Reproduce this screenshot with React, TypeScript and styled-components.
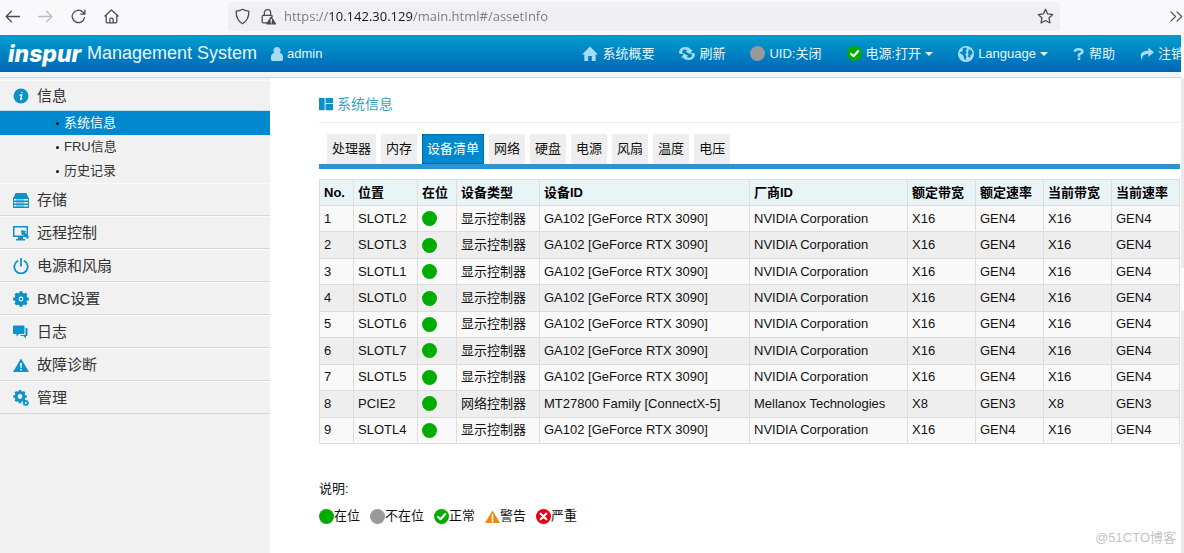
import React from "react";
import styled, { createGlobalStyle, css } from "styled-components";

const sans = `"Liberation Sans", "Noto Sans CJK SC", sans-serif`;
const blue = "#0b93c9";
const pale = "#a3dcf3";

const GlobalStyle = createGlobalStyle`
  * { box-sizing: border-box; }
  html, body, #root { height: 100%; }
  body { margin: 0; background: #fff; font: 13px/20px ${sans}; color: #111; overflow: hidden; }
  button { font: inherit; color: inherit; background: none; border: 0; padding: 0; cursor: pointer; }
  a { color: inherit; text-decoration: none; }
  ul { list-style: none; margin: 0; padding: 0; }
  svg { display: block; flex: none; }
`;

const Page = styled.div`
  display: flex;
  flex-direction: column;
  min-height: 100%;
`;

/* Browser toolbar */
const BrowserBar = styled.div`
  display: flex;
  align-items: center;
  height: 35px;
  padding: 0 0 3px 4px;
  background: #f9f9fb;
`;
const BarButton = styled.button<{ $muted?: boolean }>`
  display: flex;
  margin-right: 16px;
  color: ${(p) => (p.$muted ? "#bdbdc1" : "#4a4a50")};
`;
const AddressBox = styled.div`
  display: flex;
  align-items: center;
  flex: 1;
  height: 29px;
  margin: 0 109px 0 92px;
  padding: 0 6px;
  border-radius: 4px;
  background: #f0f0f4;
  color: #4a4a50;
  gap: 8px;
`;
const Address = styled.input`
  flex: 1;
  min-width: 0;
  border: 0;
  outline: 0;
  padding: 0;
  height: 20px;
  font: 13px/20px "Open Sans", "Noto Sans", sans-serif;
  color: transparent;
  background: linear-gradient(to right, #77777c 0 45px, #15141a 45px 129px, #77777c 129px);
  background-clip: text;
  -webkit-background-clip: text;
`;

/* Application header */
const Header = styled.header`
  display: flex;
  align-items: center;
  height: 37px;
  margin-right: 3px;
  padding-left: 8px;
  overflow: hidden;
  white-space: nowrap;
  color: #e6f6fd;
  background: linear-gradient(#009ecf, #0067b5);
`;
const Logo = styled.span`
  width: 79px;
  font: italic 800 23px/30px Inter, sans-serif;
  color: #fff;
`;
const Title = styled.h1`
  margin: 0;
  padding-bottom: 2px;
  font-size: 18px;
  font-weight: 400;
`;
const User = styled.span`
  display: flex;
  align-items: center;
  gap: 3px;
  margin-left: 13px;
`;
const Nav = styled.nav`
  display: flex;
  gap: 25px;
  margin: 0 -3px 0 auto;
`;
const NavButton = styled.button`
  display: flex;
  align-items: center;
  gap: 4px;
`;
const Caret = styled.span`
  border: 4px solid transparent;
  border-top-color: #e6f6fd;
  border-bottom: 0;
`;
const HeaderRule = styled.div`
  height: 6px;
  margin-right: 3px;
  background: #f1f4f9;
  border-bottom: 1px solid #ccd4e3;
`;

/* Body */
const Body = styled.div`
  display: flex;
  flex: 1;
`;
const Sidebar = styled.aside`
  width: 270px;
  flex: none;
  padding-top: 2px;
  background: #f1f1f1;
`;
const MenuButton = styled.button<{ $open?: boolean }>`
  display: flex;
  align-items: center;
  gap: 8px;
  width: 100%;
  height: ${(p) => (p.$open ? 31 : 33)}px;
  padding: 0 13px;
  font-size: 15px;
  color: #333;
  border-top: 1px solid #fafafa;
  border-bottom: 1px solid ${(p) => (p.$open ? "#c5e3f0" : "#d8d8d8")};
`;
const SubLink = styled.a<{ $active?: boolean }>`
  display: flex;
  align-items: center;
  gap: 5px;
  height: 24px;
  padding-left: 56px;
  color: ${(p) => (p.$active ? "#fff" : "#333")};
  background: ${(p) => (p.$active ? "#0088cf" : "transparent")};
  &::before {
    content: "";
    width: 3px;
    height: 3px;
    border-radius: 50%;
    background: #111;
  }
`;
const Main = styled.main`
  position: relative;
  flex: 1;
  min-width: 0;
  padding: 14px 1px 0 49px;
`;
const PageTitle = styled.h2`
  display: flex;
  align-items: center;
  gap: 4px;
  height: 31px;
  margin: 0 0 11px;
  padding-bottom: 7px;
  font-size: 14px;
  font-weight: 400;
  color: #3a9fc0;
  border-bottom: 1px solid #ececec;
`;
const Tabs = styled.div`
  display: flex;
  gap: 5px;
  padding-left: 8px;
  border-bottom: 5px solid #2b93d1;
`;
const Tab = styled.button<{ $active?: boolean }>`
  height: 30px;
  padding: 0 5px;
  background: #eee;
  ${(p) =>
    p.$active &&
    css`
      color: #fff;
      background: #0088cf;
      outline: 1px dotted #03588a;
      outline-offset: -1px;
    `}
`;
const Table = styled.table`
  width: 100%;
  height: 265px;
  margin-top: 10px;
  table-layout: fixed;
  border-collapse: collapse;
  tr { height: 26px; }
  th, td {
    padding: 0 4px;
    border: 1px solid #ddd;
    text-align: left;
    white-space: nowrap;
  }
  th { background: #e9f4f7; color: #000; }
  tbody tr { background: #f9f9f9; }
  tbody tr:nth-child(even) { background: #eee; }
`;
const Dot = styled.span<{ $off?: boolean }>`
  display: block;
  width: 15px;
  height: 15px;
  border-radius: 50%;
  background: ${(p) => (p.$off ? "#999" : "#00ac00")};
`;
const LegendTitle = styled.p`
  margin: 35px 0 7px;
`;
const Legend = styled.ul`
  display: flex;
  gap: 10px;
  li { display: flex; align-items: center; }
`;
const Watermark = styled.span`
  position: absolute;
  right: 5px;
  bottom: 5px;
  color: #c4c4c4;
`;
const ScrollTrack = styled.div`
  flex: none;
  width: 3px;
  padding-top: 190px;
  background: #ebebeb;
  &::before {
    content: "";
    display: block;
    height: 43px;
    background: #fafafa;
  }
`;

type P = { children: React.ReactNode; size?: number; color?: string; line?: boolean };
const Icon = ({ children, size = 16, color = "currentColor", line }: P) => (
  <svg width={size} height={size} viewBox="0 0 16 16" fill={line ? "none" : color}
    stroke={line ? color : "none"} strokeWidth={1.2} strokeLinecap="round" strokeLinejoin="round" aria-hidden="true">
    {children}
  </svg>
);

const gearPath = (cx: number, cy: number, r: number, hole: number, teeth = 8) => {
  const pts: string[] = [];
  for (let i = 0; i < teeth; i++) {
    const base = (i / teeth) * Math.PI * 2;
    const step = (Math.PI * 2) / teeth;
    [[-0.32, 0.8], [-0.24, 1], [0.24, 1], [0.32, 0.8]].forEach(([a, k]) => {
      pts.push(`${(cx + Math.cos(base + a * step) * r * k).toFixed(2)} ${(cy + Math.sin(base + a * step) * r * k).toFixed(2)}`);
    });
  }
  return `M${pts.join("L")}ZM${cx - hole} ${cy}a${hole} ${hole} 0 1 0 ${hole * 2} 0a${hole} ${hole} 0 1 0 ${-hole * 2} 0Z`;
};

const CheckIcon = () => (
  <Icon size={15}>
    <circle cx="8" cy="8" r="8" fill="#00ac00" />
    <path d="M4.2 8.3 7 10.9 12 5.3" fill="none" stroke="#fff" strokeWidth="2.2" />
  </Icon>
);

const menu = [
  { label: "存储", icon: <Icon color={blue}><path d="M2.5 1h11l2 5H.5Z" /><path fillRule="evenodd" d="M0 5.500h16V16H0ZM1 7v1.500h14V7ZM1 10v1.500h14V10ZM1 13v1.500h14V13Z" /><path d="M3 7h8v2H3ZM3 10h8v2H3ZM3 13h8v2H3Z" opacity=".4" /></Icon> },
  { label: "远程控制", icon: <Icon color={blue}><path fillRule="evenodd" d="M0 1h15v11H0ZM1.5 2.5v8h12v-8Z" /><path d="M5 12h5v2h2v1.5H3V14h2Z" /><path d="m8 5 5 1-1 1.5 4 4.5-1.5 2L10 9.500 9 11Z" /></Icon> },
  { label: "电源和风扇", icon: <Icon color={blue} line><path strokeWidth="1.8" d="M4.500 3A6.700 6.700 0 1 0 11.500 3M8 .8v7" /></Icon> },
  { label: "BMC设置", icon: <Icon color={blue}><path fillRule="evenodd" d={gearPath(8, 8, 8, 2.4)} /><circle cx="8" cy="8" r="1.3" /></Icon> },
  { label: "日志", icon: <Icon color={blue}><path d="M1 1.500h9.500q1 0 1 1V9q0 1-1 1H6L3.500 12.500V10H1Q0 10 0 9V2.500q0-1 1-1Z" /><path d="M12.500 4h1q1 0 1 1v6q0 1-1 1h-.5v2.500L10.500 12H7l1-1h3.500q1 0 1-1Z" /></Icon> },
  { label: "故障诊断", icon: <Icon color={blue}><path fillRule="evenodd" d="M8 1.500 16 15H0ZM7 6l.4 5h1.200L9 6ZM7.200 12v1.500h1.600V12Z" /></Icon> },
  { label: "管理", icon: <Icon color={blue}><path fillRule="evenodd" d={gearPath(7, 6.5, 6.8, 2.4)} /><path fillRule="evenodd" d={gearPath(12.8, 13, 3.3, 1)} /></Icon> },
];

const tabs = ["处理器", "内存", "设备清单", "网络", "硬盘", "电源", "风扇", "温度", "电压"];
const heads = ["No.", "位置", "在位", "设备类型", "设备ID", "厂商ID", "额定带宽", "额定速率", "当前带宽", "当前速率"];
const widths = [34, 64, 39, 83, undefined, 158, 68, 68, 68, 68];

const gpu = (slot: string) => ({ slot, type: "显示控制器", device: "GA102 [GeForce RTX 3090]", vendor: "NVIDIA Corporation", lanes: "X16", gen: "GEN4" });
const devices = [
  ...["SLOTL2", "SLOTL3", "SLOTL1", "SLOTL0", "SLOTL6", "SLOTL7", "SLOTL5"].map(gpu),
  { slot: "PCIE2", type: "网络控制器", device: "MT27800 Family [ConnectX-5]", vendor: "Mellanox Technologies", lanes: "X8", gen: "GEN3" },
  gpu("SLOTL4"),
];

export default function App() {
  return (
    <Page>
      <GlobalStyle />
      <BrowserBar>
        <BarButton aria-label="Back"><Icon line size={17}><path d="M14.500 8H2M7 3 2 8l5 5" /></Icon></BarButton>
        <BarButton aria-label="Forward" $muted><Icon line size={17}><path d="M1.500 8H14M9 3l5 5-5 5" /></Icon></BarButton>
        <BarButton aria-label="Reload"><Icon line size={17}><path d="M13.600 9A5.800 5.800 0 1 1 12 3.800L13.500 5.300M14 2v3.800h-3.800" /></Icon></BarButton>
        <BarButton aria-label="Home"><Icon line size={17}><path d="M1.800 7.500 8 1.800l6.200 5.700M3 6.800V13q0 1 1 1h8q1 0 1-1V6.800M6.500 14v-3.500q0-1 1-1h1q1 0 1 1V14" /></Icon></BarButton>
        <AddressBox>
          <Icon line size={17}><path d="M8 1.200q3 1.800 6 1.800 0 8.500-6 11.800Q2 11.500 2 3 5 3 8 1.200Z" /></Icon>
          <Icon line size={17}>
            <path d="M5 7V4.500a3 3 0 0 1 6 0V7M7.500 14H4q-1 0-1-1V8q0-1 1-1h7.500q1 0 1 1" />
            <path d="M11.500 8.500 15.500 15h-8Z" fill="#4a4a50" /><path d="M11.500 10.800v1.600M11.500 13.800v.1" stroke="#fff" />
          </Icon>
          <Address aria-label="Address" defaultValue="https://10.142.30.129/main.html#/assetInfo" />
          <Icon line size={17}><path d="m8 1.300 2 4.300 4.800.6-3.500 3.200.9 4.700L8 11.800l-4.200 2.300.9-4.700L1.200 6.200 6 5.600Z" /></Icon>
        </AddressBox>
        <Icon line size={15} color="#4a4a50"><path d="m2 3 5 5-5 5M8.500 3l5 5-5 5" /></Icon>
      </BrowserBar>

      <Header>
        <Logo>inspur</Logo>
        <Title>Management System</Title>
        <User>
          <Icon color={pale} size={14}><path d="M8 0a4 4 0 0 1 3.200 6.500Q15 7.500 15 12v2q0 2-2 2H3q-2 0-2-2v-2Q1 7.500 4.800 6.500A4 4 0 0 1 8 0Z" /></Icon>
          admin
        </User>
        <Nav>
          <NavButton><Icon color={pale}><path d="M8 .5 16 8.500h-2.300V15H9.800v-5H6.200v5H2.300V8.500H0Z" /></Icon>系统概要</NavButton>
          <NavButton><Icon color={pale}><path d="M0 6Q1 1 6.500 1 10.500 1 12 4l2-.5L11 8 6.500 5.500l2-.7Q7 3 5 3.500 3 4 3 6.500L5 8H2Q0 8 0 6ZM16 9q-1 5-6.500 5Q5.500 14 4 11.500L2 12l3-4.500L9.500 10l-2 .7Q9 12 11 11.500 13 11 13 8.500L11 7h3q2 0 2 2Z" /></Icon>刷新</NavButton>
          <NavButton><Dot $off />UID:关闭</NavButton>
          <NavButton><CheckIcon />电源:打开<Caret /></NavButton>
          <NavButton>
            <Icon color={pale}><path fillRule="evenodd" d="M8 0a8 8 0 1 0 .01 0ZM5 2 8 1.500 9 3 7.500 5 9 6.500 7 8.500 8.500 10 7.500 14.500 6 12 5.500 9.500 2 7 1.800 6 4.500 5.500ZM11 3l3 2 .5 3-2 1-.5 3-2-1.500.5-2.500L10 6.500Z" /></Icon>
            Language<Caret />
          </NavButton>
          <NavButton><Icon color={pale} line size={12}><path strokeWidth="3.4" strokeLinecap="butt" d="M2.500 5Q2.500 1.700 7.500 1.700t5 3.300Q12.500 7 8 8.500v3M8 12.800V16" /></Icon>帮助</NavButton>
          <NavButton><Icon color={pale} size={14}><path d="M9.500.5 16 6l-6.500 5.500V8Q2.500 7.500 2 15-2.500 4.500 9.500 4Z" /></Icon>注销</NavButton>
        </Nav>
      </Header>
      <HeaderRule />

      <Body>
        <Sidebar>
          <MenuButton $open>
            <Icon color={blue}><circle cx="8" cy="8" r="7.5" /><path d="m7 7.200 1.800-.4-1.200 4.700 1.200-.6M8.900 4.300v.2" fill="none" stroke="#fff" strokeWidth="1.3" strokeLinecap="round" /></Icon>
            信息
          </MenuButton>
          <ul>
            <li><SubLink href="#/assetInfo" $active>系统信息</SubLink></li>
            <li><SubLink href="#/fru">FRU信息</SubLink></li>
            <li><SubLink href="#/history">历史记录</SubLink></li>
          </ul>
          {menu.map((m) => <MenuButton key={m.label}>{m.icon}{m.label}</MenuButton>)}
        </Sidebar>

        <Main>
          <PageTitle>
            <Icon color={blue} size={14}><path d="M0 1h6.500v14H0ZM7.500 1H16v6H7.500ZM7.500 8H16v7H7.500Z" /></Icon>
            系统信息
          </PageTitle>
          <Tabs role="tablist">
            {tabs.map((t) => <Tab key={t} role="tab" aria-selected={t === "设备清单"} $active={t === "设备清单"}>{t}</Tab>)}
          </Tabs>
          <Table>
            <colgroup>{widths.map((w, i) => <col key={i} width={w} />)}</colgroup>
            <thead><tr>{heads.map((h) => <th key={h} scope="col">{h}</th>)}</tr></thead>
            <tbody>
              {devices.map((d, i) => (
                <tr key={d.slot}>
                  <td>{i + 1}</td><td>{d.slot}</td><td><Dot /></td><td>{d.type}</td><td>{d.device}</td>
                  <td>{d.vendor}</td><td>{d.lanes}</td><td>{d.gen}</td><td>{d.lanes}</td><td>{d.gen}</td>
                </tr>
              ))}
            </tbody>
          </Table>
          <LegendTitle>说明:</LegendTitle>
          <Legend>
            <li><Dot />在位</li>
            <li><Dot $off />不在位</li>
            <li><CheckIcon />正常</li>
            <li><Icon size={15}><path d="M8 1.500 16 15H0Z" fill="#f58410" /><path d="M8 6v4.500M8 12v1.600" stroke="#fff" strokeWidth="1.8" /></Icon>警告</li>
            <li><Icon size={15}><circle cx="8" cy="8" r="8" fill="#e60012" /><path d="m5 5 6 6M11 5l-6 6" stroke="#fff" strokeWidth="2.4" /></Icon>严重</li>
          </Legend>
          <Watermark>@51CTO博客</Watermark>
        </Main>
        <ScrollTrack />
      </Body>
    </Page>
  );
}
